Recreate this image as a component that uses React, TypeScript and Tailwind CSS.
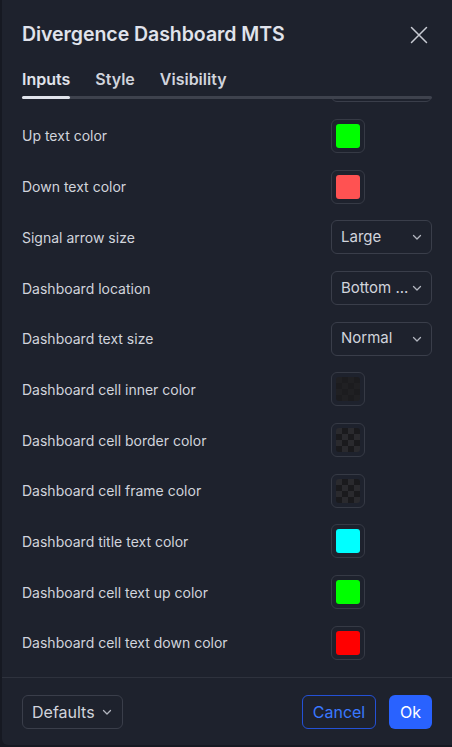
import { ReactNode } from "react";

type Row =
  | { label: string; kind: "color"; color: string }
  | { label: string; kind: "empty"; shade: "inner" | "grid" }
  | { label: string; kind: "select"; value: string };

const rows: Row[] = [
  { label: "Up text color", kind: "color", color: "#00ff00" },
  { label: "Down text color", kind: "color", color: "#ff5252" },
  { label: "Signal arrow size", kind: "select", value: "Large" },
  { label: "Dashboard location", kind: "select", value: "Bottom ..." },
  { label: "Dashboard text size", kind: "select", value: "Normal" },
  { label: "Dashboard cell inner color", kind: "empty", shade: "inner" },
  { label: "Dashboard cell border color", kind: "empty", shade: "grid" },
  { label: "Dashboard cell frame color", kind: "empty", shade: "grid" },
  { label: "Dashboard title text color", kind: "color", color: "#00ffff" },
  { label: "Dashboard cell text up color", kind: "color", color: "#00ff00" },
  { label: "Dashboard cell text down color", kind: "color", color: "#ff0000" },
];

function Chevron() {
  return (
    <svg width="12" height="12" viewBox="0 0 12 12" fill="none" stroke="#b2b5be" strokeWidth="1.3" strokeLinecap="round" strokeLinejoin="round">
      <path d="M2.5 4.5 6 8l3.5-3.5" />
    </svg>
  );
}

function Select({ value }: { value: string }) {
  return (
    <div className="flex h-[34px] w-[101px] items-center justify-between rounded-md border border-[#3a3e4a] pl-[9px] pr-[8px] text-[15px] text-[#d1d4dc]">
      <span>{value}</span>
      <Chevron />
    </div>
  );
}

function Checker({ dark }: { dark: boolean }) {
  const cells: ReactNode[] = [];
  for (let r = 0; r < 4; r++) {
    for (let c = 0; c < 4; c++) {
      const odd = (r + c) % 2 === 1;
      cells.push(
        <div
          key={`${r}-${c}`}
          className={odd ? (dark ? "bg-[#1c1c1f]" : "bg-[#1a1a1d]") : dark ? "bg-[#202023]" : "bg-[#2a2a2e]"}
        />
      );
    }
  }
  return <div className="grid h-[24px] w-[24px] grid-cols-4 grid-rows-4 overflow-hidden rounded-[3px]">{cells}</div>;
}

function Swatch({ children }: { children: ReactNode }) {
  return (
    <div className="flex h-[34px] w-[34px] items-center justify-center rounded-md border border-[#363a45]">
      {children}
    </div>
  );
}

export default function App() {
  return (
    <div className="flex h-[747px] w-[452px] bg-[#161922]" style={{ fontFamily: "Inter, 'Noto Sans', sans-serif" }}>
      <div className="ml-[2px] mb-[2px] flex min-w-0 flex-1 flex-col rounded-bl-md bg-[#1e222d] text-[#d1d4dc]">
        <div className="flex items-center justify-between pl-[20px] pr-[24px] pt-[20px]">
          <h1 className="text-[19.5px] font-semibold tracking-[-0.05px] text-[#e0e3eb]">Divergence Dashboard MTS</h1>
          <svg width="18" height="18" viewBox="0 0 18 18" fill="none" stroke="#c8cbd3" strokeWidth="1.5" strokeLinecap="round">
            <path d="M1.5 1.5 16.5 16.5M16.5 1.5 1.5 16.5" />
          </svg>
        </div>

        <div className="px-[20px] pt-[18px]">
          <div className="flex gap-[25px] text-[16px] font-semibold text-[#d1d4dc]">
            <span className="text-[#e0e3eb]">Inputs</span>
            <span>Style</span>
            <span>Visibility</span>
          </div>
          <div className="relative z-10 mt-[5px] h-[3px] w-full rounded-full bg-[#3e424d]">
            <div className="h-[3px] w-[48px] rounded-full bg-[#e0e3eb]" />
          </div>
        </div>

        <div className="flex-1 overflow-hidden">
          <div className="-mt-[31px] flex flex-col gap-[16.7px] pl-[20px] pr-[20px]">
            <div className="flex h-[34px] items-center justify-end">
              <Select value="" />
            </div>
            {rows.map((row) => (
              <div key={row.label} className="flex h-[34px] items-center justify-between">
                <span className="text-[14px] text-[#d1d4dc]">{row.label}</span>
                <div className="w-[101px]">
                  {row.kind === "select" && <Select value={row.value} />}
                  {row.kind === "color" && (
                    <Swatch>
                      <div className="h-[24px] w-[24px] rounded-[3px]" style={{ backgroundColor: row.color }} />
                    </Swatch>
                  )}
                  {row.kind === "empty" && (
                    <Swatch>
                      <Checker dark={row.shade === "inner"} />
                    </Swatch>
                  )}
                </div>
              </div>
            ))}
            <div className="flex h-[34px] items-center justify-end">
              <Select value="" />
            </div>
          </div>
        </div>

        <div className="flex h-[68px] items-center justify-between border-t border-[#2e323d] pl-[20px] pr-[20px]">
          <div className="flex h-[34px] w-[101px] items-center justify-between rounded-md border border-[#3a3e4a] pl-[9px] pr-[9px] text-[16px] text-[#d1d4dc]">
            <span>Defaults</span>
            <Chevron />
          </div>
          <div className="flex gap-[13px]">
            <button type="button" className="h-[34px] w-[74px] rounded-md border border-[#2451d6] text-[16px] text-[#3a78ff]">
              Cancel
            </button>
            <button type="button" className="h-[34px] w-[43px] rounded-md bg-[#2962ff] text-[16px] text-white">
              Ok
            </button>
          </div>
        </div>
      </div>
    </div>
  );
}
